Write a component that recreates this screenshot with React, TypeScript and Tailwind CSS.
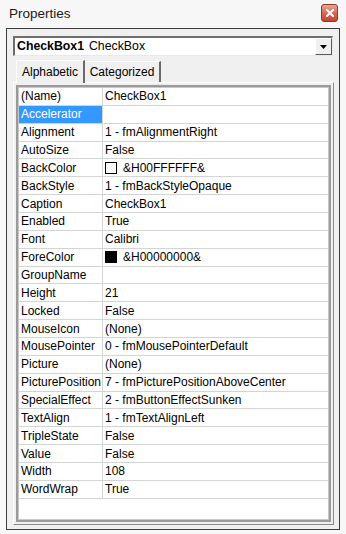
import React from "react";

const rows: { name: string; value: string; swatch?: "white" | "black"; selected?: boolean }[] = [
  { name: "(Name)", value: "CheckBox1" },
  { name: "Accelerator", value: "", selected: true },
  { name: "Alignment", value: "1 - fmAlignmentRight" },
  { name: "AutoSize", value: "False" },
  { name: "BackColor", value: "&H00FFFFFF&", swatch: "white" },
  { name: "BackStyle", value: "1 - fmBackStyleOpaque" },
  { name: "Caption", value: "CheckBox1" },
  { name: "Enabled", value: "True" },
  { name: "Font", value: "Calibri" },
  { name: "ForeColor", value: "&H00000000&", swatch: "black" },
  { name: "GroupName", value: "" },
  { name: "Height", value: "21" },
  { name: "Locked", value: "False" },
  { name: "MouseIcon", value: "(None)" },
  { name: "MousePointer", value: "0 - fmMousePointerDefault" },
  { name: "Picture", value: "(None)" },
  { name: "PicturePosition", value: "7 - fmPicturePositionAboveCenter" },
  { name: "SpecialEffect", value: "2 - fmButtonEffectSunken" },
  { name: "TextAlign", value: "1 - fmTextAlignLeft" },
  { name: "TripleState", value: "False" },
  { name: "Value", value: "False" },
  { name: "Width", value: "108" },
  { name: "WordWrap", value: "True" },
];

export default function App() {
  return (
    <div className="w-[346px] h-[534px] bg-[#f7f7f7] text-black font-['Liberation_Sans',Arial,sans-serif] overflow-hidden">
      {/* Title bar */}
      <div className="h-[28px] flex items-center justify-between pl-[9px] pr-[8px]">
        <span className="text-[13.5px] leading-none text-[#1a1a1a] -mt-[1px]">Properties</span>
        <div className="w-[17px] h-[18px] rounded-[3px] border border-[#8a3b2f] bg-gradient-to-b from-[#e9a694] via-[#d66a55] to-[#c0452f] flex items-center justify-center -mt-[2px]">
          <svg width="8" height="8" viewBox="0 0 8 8">
            <path d="M1 1 L7 7 M7 1 L1 7" stroke="#ffffff" strokeWidth="2" strokeLinecap="square" />
          </svg>
        </div>
      </div>

      {/* Frame */}
      <div className="mx-[6px] h-[502px] border border-[#3e3e3e] bg-[#f0f0f0] px-[6px] pt-[7px] flex flex-col">
        {/* Combo */}
        <div className="h-[20px] flex border-t-2 border-l-2 border-t-[#6e6e6e] border-l-[#6e6e6e] border-r border-b border-r-[#e8e8e8] border-b-[#e8e8e8] bg-white">
          <div className="flex-1 flex items-center pl-[2px] text-[12.3px] leading-none whitespace-nowrap">
            <span className="font-bold">CheckBox1</span>
            <span className="ml-[5px]">CheckBox</span>
          </div>
          <div className="w-[17px] h-full bg-[#f0f0f0] border-t border-l border-t-white border-l-white border-r border-b border-r-[#5a5a5a] border-b-[#5a5a5a] flex items-center justify-center">
            <svg width="7" height="4" viewBox="0 0 7 4">
              <path d="M0 0 L7 0 L3.5 4 Z" fill="#000" />
            </svg>
          </div>
        </div>

        {/* Tabs */}
        <div className="mt-[3px] h-[23px] flex items-end pl-[3px] text-[12px] leading-none">
          <div className="relative z-10 h-[23px] w-[69px] bg-[#f0f0f0] border-t border-l border-t-white border-l-white border-r-2 border-r-[#6a6a6a] flex items-center justify-center -mb-[1px] pb-[1px]">
            Alphabetic
          </div>
          <div className="h-[21px] w-[76px] bg-[#f0f0f0] border-t border-t-white border-r-2 border-r-[#6a6a6a] flex items-center justify-center">
            Categorized
          </div>
        </div>

        {/* Page */}
        <div className="mr-[-1px] h-[443px] border-t border-l border-t-white border-l-white border-r border-b border-r-[#8a8a8a] border-b-[#8a8a8a] p-[2px]">
          <div className="h-full border-2 border-[#9a9a9a] bg-white">
            <div className="h-full border border-[#c8c8c8] bg-white">
              {rows.map((r) => (
                <div key={r.name} className="h-[17.86px] flex border-b border-[#d4d4d4] text-[12px] leading-none">
                  <div
                    className={`w-[84px] shrink-0 border-r border-[#d4d4d4] pl-[2px] flex items-center whitespace-nowrap ${
                      r.selected ? "bg-[#3399ff] text-white" : ""
                    }`}
                  >
                    {r.name}
                  </div>
                  <div className="flex-1 flex items-center pl-[2px] whitespace-nowrap">
                    {r.swatch && (
                      <span
                        className={`w-[12px] h-[12px] border border-black mr-[6px] ${
                          r.swatch === "black" ? "bg-black" : "bg-white"
                        }`}
                      />
                    )}
                    {r.value}
                  </div>
                </div>
              ))}
            </div>
          </div>
        </div>
      </div>
    </div>
  );
}
